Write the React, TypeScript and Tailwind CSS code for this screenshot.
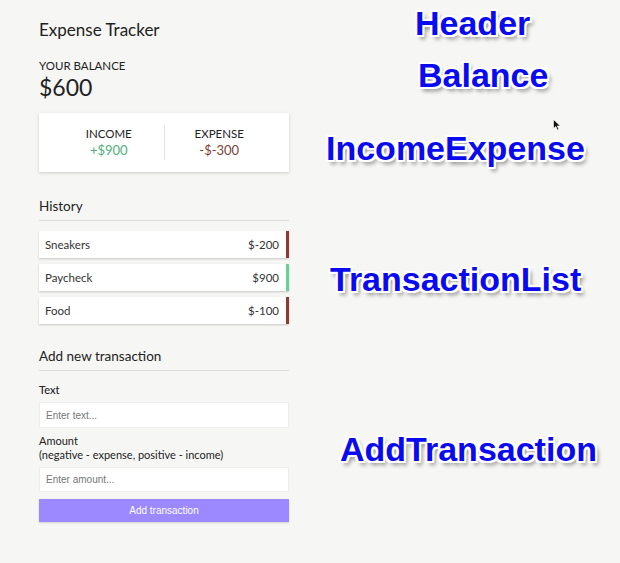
import React from 'react';

type Tx = { id: number; text: string; amount: number };

const TRANSACTIONS: Tx[] = [
  { id: 1, text: 'Sneakers', amount: -200 },
  { id: 2, text: 'Paycheck', amount: 900 },
  { id: 3, text: 'Food', amount: -100 },
];

const labelClass =
  "block font-['Liberation_Sans',Arial,sans-serif] font-bold text-[34px] leading-none text-[#0a0af0] [text-shadow:-2px_-2px_0_#fff,2px_-2px_0_#fff,-2px_2px_0_#fff,2px_2px_0_#fff,0_-2px_0_#fff,0_2px_0_#fff,-2px_0_0_#fff,2px_0_0_#fff,3px_4px_4px_rgba(0,0,0,0.45)]";

const TransactionItem: React.FC<{ tx: Tx }> = ({ tx }) => {
  const minus = tx.amount < 0;
  return (
    <li
      className={`flex justify-between items-center h-[27px] bg-white pl-[6px] pr-[7px] text-[11.5px] text-[#333] shadow-[0_1px_2px_rgba(0,0,0,0.2)] border-r-[3px] ${
        minus ? 'border-[#8e3a34]' : 'border-[#6ccf98]'
      }`}
    >
      <span>{tx.text}</span>
      <span>${tx.amount}</span>
    </li>
  );
};

const App: React.FC = () => {
  return (
    <div className="flex min-h-[563px] w-[620px] bg-[#f6f6f5] font-['Lato','Open_Sans',sans-serif] text-[#222]">
      {/* app column */}
      <div className="w-[250px] ml-[39px] pt-[20px]">
        <h2 className="text-[17px] leading-[20px] text-[#222]">Expense Tracker</h2>

        <h4 className="mt-[19px] text-[11.5px] leading-[14px] uppercase">Your Balance</h4>
        <h1 className="text-[23px] leading-[28px]">$600</h1>

        <div className="mt-[12px] h-[59px] bg-white shadow-[0_1px_3px_rgba(0,0,0,0.18)] flex items-center px-[15px]">
          <div className="flex-1 text-center">
            <h4 className="text-[11.5px] leading-[14px] uppercase">Income</h4>
            <p className="text-[13px] leading-[18px] text-[#4fb07a]">+$900</p>
          </div>
          <div className="w-px h-[35px] bg-[#e4e4e4]" />
          <div className="flex-1 text-center">
            <h4 className="text-[11.5px] leading-[14px] uppercase">Expense</h4>
            <p className="text-[13px] leading-[18px] text-[#7f3f39]">-$-300</p>
          </div>
        </div>

        <h3 className="mt-[25px] pb-[5px] text-[13.5px] leading-[18px] border-b border-[#ddd]">History</h3>
        <ul className="mt-[10px] flex flex-col gap-[6px]">
          {TRANSACTIONS.map((tx) => (
            <TransactionItem key={tx.id} tx={tx} />
          ))}
        </ul>

        <h3 className="mt-[23px] pb-[5px] text-[13.5px] leading-[18px] border-b border-[#ddd]">Add new transaction</h3>
        <form className="mt-[12px]" onSubmit={(e) => e.preventDefault()}>
          <label className="block text-[11px] leading-[14px] font-medium">Text</label>
          <input
            type="text"
            placeholder="Enter text..."
            className="mt-[5px] block w-full h-[26px] bg-white border border-[#eee] px-[6px] text-[10px] font-['Liberation_Sans',Arial,sans-serif] placeholder:text-[#777] outline-none"
          />
          <label className="block mt-[6px] text-[11px] leading-[14px]">
            Amount
            <br />
            (negative - expense, positive - income)
          </label>
          <input
            type="number"
            placeholder="Enter amount..."
            className="mt-[5px] block w-full h-[25px] bg-white border border-[#eee] px-[6px] text-[10px] font-['Liberation_Sans',Arial,sans-serif] placeholder:text-[#777] outline-none"
          />
          <button className="mt-[7px] block w-full h-[23px] bg-[#9c88ff] text-white text-[10px] font-['Liberation_Sans',Arial,sans-serif] shadow-[0_1px_2px_rgba(0,0,0,0.15)]">
            Add transaction
          </button>
        </form>
      </div>

      {/* component labels */}
      <div className="relative ml-[21px] w-[310px]">
        <span className={`${labelClass} mt-[6px] pl-[105px]`}>Header</span>
        <span className={`${labelClass} mt-[18px] pl-[108px]`}>Balance</span>
        <span className={`${labelClass} mt-[39px] pl-[16px]`}>IncomeExpense</span>
        <span className={`${labelClass} mt-[97px] pl-[20px]`}>TransactionList</span>
        <span className={`${labelClass} mt-[136px] pl-[30px]`}>AddTransaction</span>

        <svg className="absolute left-[243px] top-[119px]" width="8" height="12" viewBox="0 0 8 12">
          <path d="M0.5 0.5 L0.5 9.5 L2.8 7.4 L4.4 11 L5.8 10.4 L4.3 6.9 L7.3 6.9 Z" fill="#111" stroke="#fff" strokeWidth="0.6" />
        </svg>
      </div>
    </div>
  );
};

export default App;
